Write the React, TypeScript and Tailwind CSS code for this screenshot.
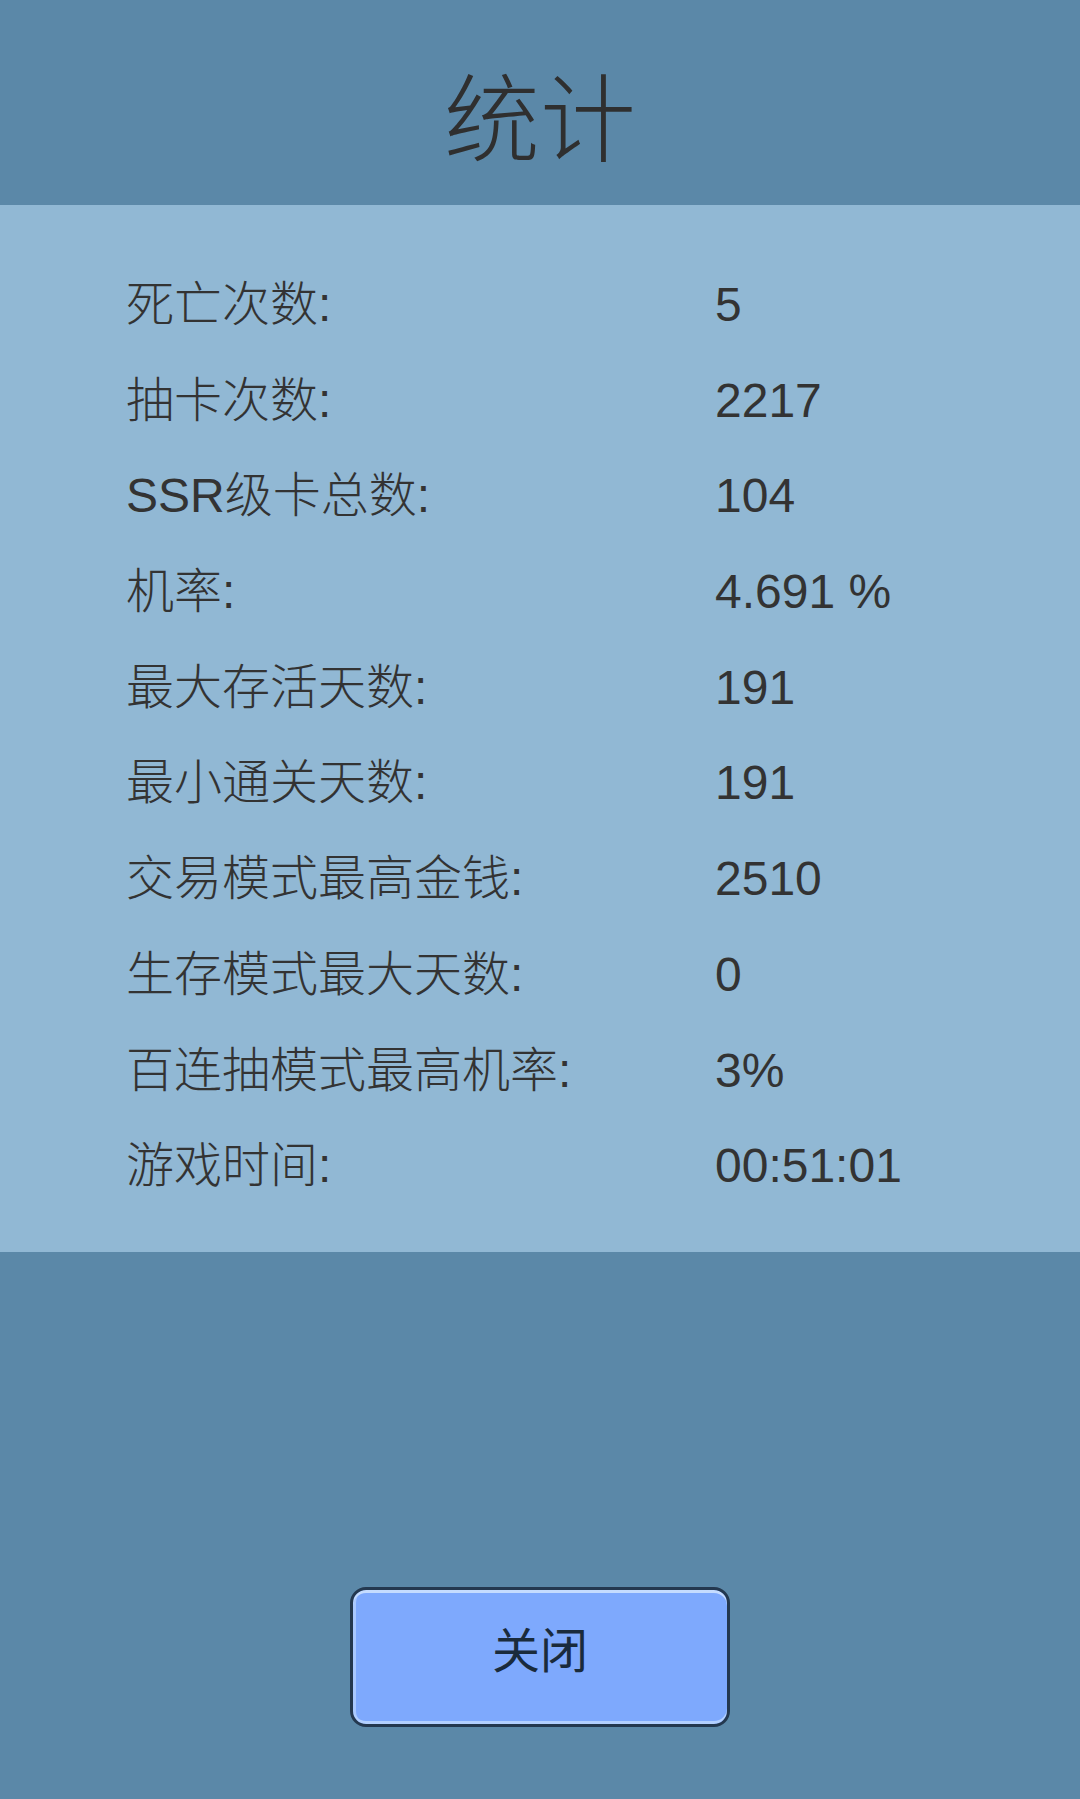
const font = { fontFamily: '"Liberation Sans", "Noto Sans CJK SC", sans-serif' };

const stats: [string, string][] = [
  ["死亡次数:", "5"],
  ["抽卡次数:", "2217"],
  ["SSR级卡总数:", "104"],
  ["机率:", "4.691 %"],
  ["最大存活天数:", "191"],
  ["最小通关天数:", "191"],
  ["交易模式最高金钱:", "2510"],
  ["生存模式最大天数:", "0"],
  ["百连抽模式最高机率:", "3%"],
  ["游戏时间:", "00:51:01"],
];

export default function App() {
  return (
    <div className="flex min-h-[1799px] w-[1080px] flex-col bg-[#5b88a8] font-light text-[#333333]" style={font}>
      <header className="flex h-[205px] items-start justify-center pt-[73px]">
        <h1 className="text-[96px] leading-[96px] text-[#2f2f2f]">统计</h1>
      </header>

      <section className="bg-[#91b8d4] pb-[38px] pl-[126px] pt-[52px]">
        {stats.map(([label, value]) => (
          <div key={label} className="grid h-[95.7px] grid-cols-[589px_1fr] text-[48px] leading-[95.7px]">
            <span>{label}</span>
            <span>{value}</span>
          </div>
        ))}
      </section>

      <div className="flex flex-1 justify-center pt-[335px]">
        <button className="h-[140px] w-[380px] rounded-[16px] border-[3px] border-[#24384f] bg-[#7ea9fd] pb-[10px] text-[48px] font-normal text-[#1a2b3c] shadow-[inset_0_3px_0_#c5dcff,inset_0_-3px_0_#b3d0ff,inset_3px_0_0_#a9c8ff]">
          关闭
        </button>
      </div>
    </div>
  );
}
